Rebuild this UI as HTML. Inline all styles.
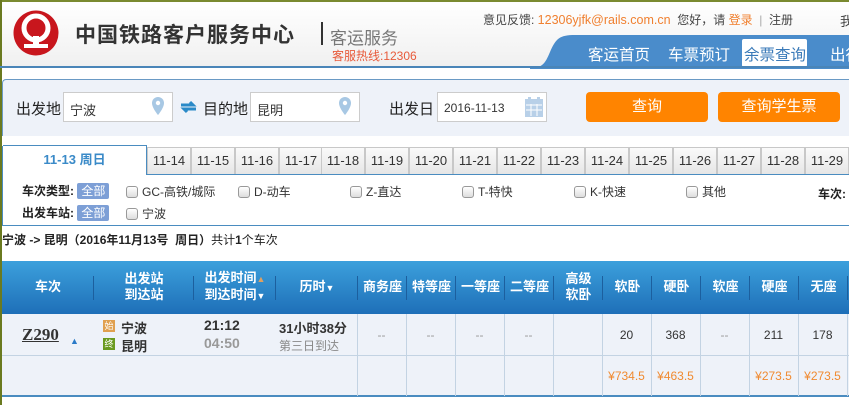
<!DOCTYPE html>
<html><head><meta charset="utf-8"><style>
*{margin:0;padding:0;box-sizing:border-box}
body{width:849px;height:405px;overflow:hidden;background:#fff;font-family:"Liberation Sans","Noto Sans CJK SC",sans-serif;position:relative;font-size:12px;color:#333}
.a{position:absolute;white-space:nowrap}
.hdr{position:absolute;left:0;top:0;width:849px;height:67px;background:linear-gradient(#fff,#f0f0f0)}
.inp{position:absolute;height:30px;border:1px solid #ccc;background:#fff;font-size:13px;padding:7px 6px;color:#333}
.btn{position:absolute;top:92px;height:30px;background:#ff8400;border-radius:4px;color:#fff;font-size:15px;text-align:center;line-height:30px}
.tab{position:absolute;top:147px;height:27px;width:44px;background:linear-gradient(#fafafa,#e6e6e6);border:1px solid #c8c8c8;border-bottom:none;text-align:center;line-height:26px;font-size:13px;color:#333}
.cb{display:inline-block;width:12px;height:12px;border:1px solid #999;border-radius:3px;background:linear-gradient(#fff,#ddd);vertical-align:-2px;margin-right:4px}
.all{background:#7d9fd6;color:#fff;padding:1px 4px;border-radius:2px}
.th{position:absolute;top:261px;height:52px;color:#fff;font-weight:bold;font-size:13px;text-align:center;display:flex;flex-direction:column;align-items:center;justify-content:center;line-height:16px;white-space:nowrap}
.sep{position:absolute;top:276px;width:1px;height:24px;background:#1c5f9e}
.vl{position:absolute;top:314px;width:1px;height:82px;background:#c3d3e3}
.c{position:absolute;text-align:center;width:49px}
</style></head><body>
<div class="hdr"></div>
<div class="a" style="left:0;top:0;width:849px;height:2px;background:#7a8a30"></div>
<div class="a" style="left:0;top:0;width:2px;height:405px;background:#6a7a20"></div>
<svg class="a" style="left:13px;top:10px" width="46" height="46" viewBox="0 0 46 46"><circle cx="23" cy="23" r="22.5" fill="#c8161d"/><circle cx="23" cy="18" r="12" fill="none" stroke="#fff" stroke-width="5"/><rect x="20" y="26" width="6" height="10" fill="#fff"/><rect x="11" y="34" width="24" height="4" fill="#fff"/></svg>
<div class="a" style="left:75px;top:19px;font-size:21px;font-weight:bold;color:#333;letter-spacing:1px">中国铁路客户服务中心</div>
<div class="a" style="left:321px;top:22px;width:2px;height:23px;background:#333"></div>
<div class="a" style="left:330px;top:24px;font-size:17px;color:#777">客运服务</div>
<div class="a" style="left:332px;top:47px;font-size:12px;color:#e85a3a">客服热线:12306</div>
<div class="a" style="left:483px;top:11px;font-size:12px;color:#444">意见反馈: <span style="color:#f08030;font-size:12.5px">12306yjfk@rails.com.cn</span>&nbsp; 您好，请 <span style="color:#f08030">登录</span> &nbsp;<span style="color:#aaa">|</span>&nbsp; 注册</div>
<div class="a" style="left:840px;top:11px;font-size:13px;color:#444">我</div>
<svg class="a" style="left:530px;top:34px" width="319" height="35"><path d="M0 34 C12 34 15 30 20 18 C26 4 30 1 45 1 L319 1 L319 35 L0 35Z" fill="#4a8ccb"/></svg>
<div class="a" style="left:588px;top:43px;font-size:15.5px;color:#fff">客运首页</div>
<div class="a" style="left:668px;top:43px;font-size:15.5px;color:#fff">车票预订</div>
<div class="a" style="left:742px;top:39px;width:65px;height:28px;background:#fff;border-radius:2px"></div>
<div class="a" style="left:744px;top:43px;font-size:15.5px;color:#3a7ab8">余票查询</div>
<div class="a" style="left:830px;top:43px;font-size:15.5px;color:#fff">出行</div>
<div class="a" style="left:0;top:66px;width:849px;height:2px;background:#4a85b8"></div>
<div class="a" style="left:2px;top:79px;width:849px;height:57px;background:#eef2f9;border-top:1px solid #6a9ac5;border-left:1px solid #6a9ac5;border-radius:4px 0 0 0"></div>
<div class="a" style="left:16px;top:98px;font-size:15px;color:#222">出发地</div>
<div class="inp" style="left:63px;top:92px;width:110px">宁波</div>
<svg class="a" style="left:151px;top:96px" width="14" height="20"><path d="M7 1a6 6 0 0 0-6 6c0 5 6 12 6 12s6-7 6-12a6 6 0 0 0-6-6z" fill="#a8c8e4"/><circle cx="7" cy="7" r="2.2" fill="#fff"/></svg>
<svg class="a" style="left:180px;top:100px" width="17" height="14"><path d="M1 5h12l-3-3M16 9H4l3 3" stroke="#2a8ac8" stroke-width="3" fill="none"/></svg>
<div class="a" style="left:203px;top:98px;font-size:15px;color:#222">目的地</div>
<div class="inp" style="left:250px;top:92px;width:110px">昆明</div>
<svg class="a" style="left:338px;top:96px" width="14" height="20"><path d="M7 1a6 6 0 0 0-6 6c0 5 6 12 6 12s6-7 6-12a6 6 0 0 0-6-6z" fill="#a8c8e4"/><circle cx="7" cy="7" r="2.2" fill="#fff"/></svg>
<div class="a" style="left:389px;top:98px;font-size:15px;color:#222">出发日</div>
<div class="inp" style="left:437px;top:92px;width:110px;font-size:12px;padding-top:8px">2016-11-13</div>
<svg class="a" style="left:524px;top:96px" width="20" height="22"><rect x="1" y="3" width="18" height="18" fill="#b8d0e8"/><path d="M2 9h16M2 14h16M7 8v12M13 8v12" stroke="#fff"/><rect x="4" y="1" width="3" height="4" fill="#b8d0e8"/><rect x="13" y="1" width="3" height="4" fill="#b8d0e8"/></svg>
<div class="btn" style="left:586px;width:122px">查询</div>
<div class="btn" style="left:718px;width:122px">查询学生票</div>
<div class="a" style="left:2px;top:146px;width:847px;height:80px;border:1px solid #4a8cc0;border-right:none;border-top:none"></div>
<div class="a" style="left:3px;top:145px;width:144px;height:30px;background:#fff;border-top:1px solid #4a8cc0;border-right:1px solid #4a8cc0;text-align:center;line-height:28px;font-size:13px;font-weight:bold;color:#3a8ac8">11-13 周日</div>
<div class="tab" style="left:147px">11-14</div><div class="tab" style="left:191px">11-15</div><div class="tab" style="left:235px">11-16</div><div class="tab" style="left:279px">11-17</div><div class="tab" style="left:321px">11-18</div><div class="tab" style="left:365px">11-19</div><div class="tab" style="left:409px">11-20</div><div class="tab" style="left:453px">11-21</div><div class="tab" style="left:497px">11-22</div><div class="tab" style="left:541px">11-23</div><div class="tab" style="left:585px">11-24</div><div class="tab" style="left:629px">11-25</div><div class="tab" style="left:673px">11-26</div><div class="tab" style="left:717px">11-27</div><div class="tab" style="left:761px">11-28</div><div class="tab" style="left:805px">11-29</div>
<div class="a" style="left:147px;top:174px;width:702px;height:1px;background:#4a8cc0"></div>
<div class="a" style="left:22px;top:182px;font-size:12px;font-weight:bold;color:#222">车次类型: <span class="all" style="font-weight:normal">全部</span></div>
<div class="a" style="left:126px;top:183px"><span class="cb"></span>GC-高铁/城际</div>
<div class="a" style="left:238px;top:183px"><span class="cb"></span>D-动车</div>
<div class="a" style="left:350px;top:183px"><span class="cb"></span>Z-直达</div>
<div class="a" style="left:462px;top:183px"><span class="cb"></span>T-特快</div>
<div class="a" style="left:574px;top:183px"><span class="cb"></span>K-快速</div>
<div class="a" style="left:686px;top:183px"><span class="cb"></span>其他</div>
<div class="a" style="left:818px;top:185px;font-weight:bold;color:#222">车次:</div>
<div class="a" style="left:22px;top:204px;font-size:12px;font-weight:bold;color:#222">出发车站: <span class="all" style="font-weight:normal">全部</span></div>
<div class="a" style="left:126px;top:205px"><span class="cb"></span>宁波</div>
<div class="a" style="left:2px;top:231px;font-size:12px;color:#222"><b>宁波 -&gt; 昆明（2016年11月13号&nbsp; 周日）</b>共计<b>1</b>个车次</div>
<div class="a" style="left:2px;top:261px;width:847px;height:53px;background:linear-gradient(#3ca0dc,#1e6fb8)"></div>
<div class="th" style="left:2px;width:92px">车次</div>
<div class="th" style="left:94px;width:100px"><div>出发站</div><div>到达站</div></div>
<div class="th" style="left:194px;width:82px"><div>出发时间<span style="color:#e0a060;font-size:9px">▲</span></div><div>到达时间<span style="font-size:9px">▼</span></div></div>
<div class="th" style="left:276px;width:82px"><div>历时<span style="font-size:9px">▼</span></div></div>
<div class="th" style="left:358px;width:49px">商务座</div><div class="th" style="left:407px;width:49px">特等座</div><div class="th" style="left:456px;width:49px">一等座</div><div class="th" style="left:505px;width:49px">二等座</div><div class="th" style="left:554px;width:49px"><div>高级</div><div>软卧</div></div><div class="th" style="left:603px;width:49px">软卧</div><div class="th" style="left:652px;width:49px">硬卧</div><div class="th" style="left:701px;width:49px">软座</div><div class="th" style="left:750px;width:49px">硬座</div><div class="th" style="left:799px;width:49px">无座</div>
<div class="sep" style="left:93px"></div><div class="sep" style="left:193px"></div><div class="sep" style="left:275px"></div><div class="sep" style="left:357px"></div><div class="sep" style="left:406px"></div><div class="sep" style="left:455px"></div><div class="sep" style="left:504px"></div><div class="sep" style="left:553px"></div><div class="sep" style="left:602px"></div><div class="sep" style="left:651px"></div><div class="sep" style="left:700px"></div><div class="sep" style="left:749px"></div><div class="sep" style="left:798px"></div><div class="sep" style="left:847px"></div>
<div class="a" style="left:2px;top:314px;width:847px;height:82px;background:#eef2f9"></div>
<div class="a" style="left:2px;top:355px;width:847px;height:1px;background:#c3d3e3"></div>
<div class="a" style="left:2px;top:395px;width:847px;height:2px;background:#4a8cc0"></div>
<div class="vl" style="left:357px"></div><div class="vl" style="left:406px"></div><div class="vl" style="left:455px"></div><div class="vl" style="left:504px"></div><div class="vl" style="left:553px"></div><div class="vl" style="left:602px"></div><div class="vl" style="left:651px"></div><div class="vl" style="left:700px"></div><div class="vl" style="left:749px"></div><div class="vl" style="left:798px"></div><div class="vl" style="left:847px"></div>
<div class="a" style="left:22px;top:325px;font-family:'Liberation Serif',serif;font-size:17px;font-weight:bold;text-decoration:underline;color:#333">Z290</div>
<div class="a" style="left:70px;top:336px;font-size:9px;color:#2a7ac8">▲</div>
<div class="a" style="left:103px;top:320px;width:12px;height:12px;background:#e0a050;color:#fff;font-size:9px;line-height:12px;text-align:center">始</div>
<div class="a" style="left:103px;top:338px;width:12px;height:12px;background:#6a9a20;color:#fff;font-size:9px;line-height:12px;text-align:center">终</div>
<div class="a" style="left:121px;top:318px;font-size:13px;font-weight:bold;color:#333">宁波</div>
<div class="a" style="left:121px;top:336px;font-size:13px;font-weight:bold;color:#333">昆明</div>
<div class="a" style="left:204px;top:317px;font-size:14px;font-weight:bold;color:#333">21:12</div>
<div class="a" style="left:204px;top:335px;font-size:14px;font-weight:bold;color:#999">04:50</div>
<div class="a" style="left:279px;top:318px;font-size:13px;font-weight:bold;color:#333">31小时38分</div>
<div class="a" style="left:279px;top:337px;font-size:12px;color:#888">第三日到达</div>
<div class="c" style="left:357px;top:328px;color:#999">--</div><div class="c" style="left:406px;top:328px;color:#999">--</div><div class="c" style="left:455px;top:328px;color:#999">--</div><div class="c" style="left:504px;top:328px;color:#999">--</div>
<div class="c" style="left:602px;top:328px">20</div><div class="c" style="left:651px;top:328px">368</div><div class="c" style="left:700px;top:328px;color:#999">--</div><div class="c" style="left:749px;top:328px">211</div><div class="c" style="left:798px;top:328px">178</div>
<div class="c" style="left:602px;top:369px;color:#f08a30">¥734.5</div><div class="c" style="left:651px;top:369px;color:#f08a30">¥463.5</div><div class="c" style="left:749px;top:369px;color:#f08a30">¥273.5</div><div class="c" style="left:798px;top:369px;color:#f08a30">¥273.5</div>
</body></html>
